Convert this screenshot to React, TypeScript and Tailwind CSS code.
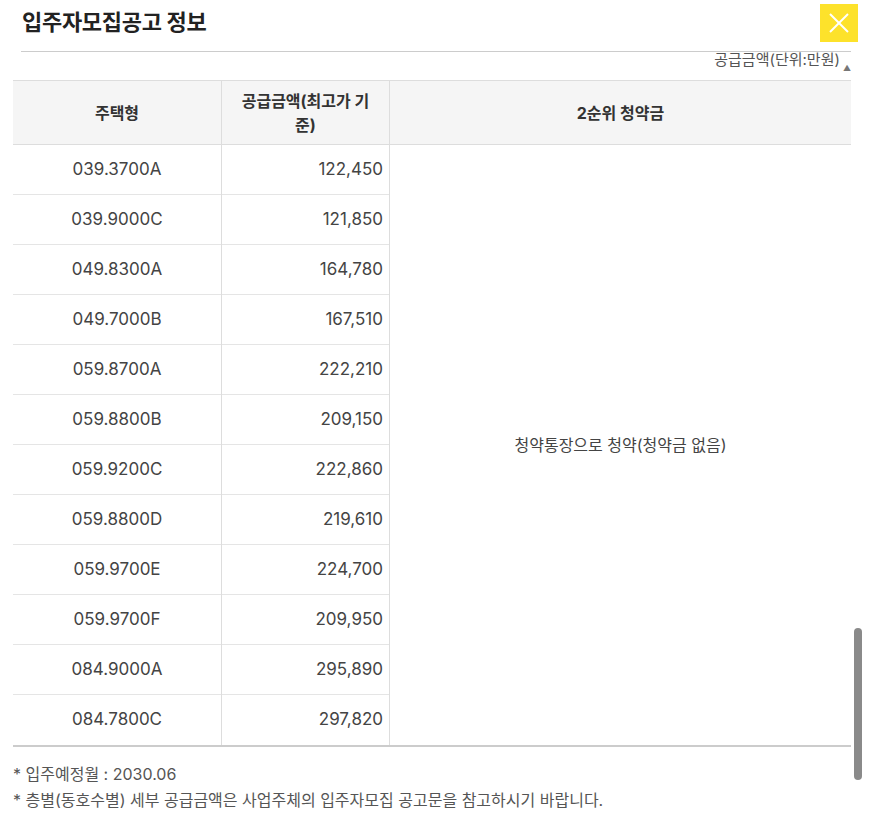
import React from "react";

const rows: [string, string][] = [
  ["039.3700A", "122,450"],
  ["039.9000C", "121,850"],
  ["049.8300A", "164,780"],
  ["049.7000B", "167,510"],
  ["059.8700A", "222,210"],
  ["059.8800B", "209,150"],
  ["059.9200C", "222,860"],
  ["059.8800D", "219,610"],
  ["059.9700E", "224,700"],
  ["059.9700F", "209,950"],
  ["084.9000A", "295,890"],
  ["084.7800C", "297,820"],
];

export default function App() {
  return (
    <div
      className="relative w-[883px] h-[818px] bg-white overflow-hidden text-[#333]"
      style={{ fontFamily: 'Inter, "Noto Sans CJK KR", "Noto Sans", sans-serif' }}
    >
      <div className="flex items-start justify-between pl-[22px] pr-[25px] pt-[4px]">
        <h1 className="text-[22px] font-bold text-[#222] mt-[2px] tracking-[-0.3px]">입주자모집공고 정보</h1>
        <button className="w-[38px] h-[38px] bg-[#fde22b] flex items-center justify-center">
          <svg width="22" height="22" viewBox="0 0 22 22" stroke="white" strokeWidth="2">
            <line x1="2" y1="2" x2="20" y2="20" />
            <line x1="20" y1="2" x2="2" y2="20" />
          </svg>
        </button>
      </div>
      <div className="mx-[21px] w-[830px] border-t border-[#ccc] mt-[9px]" />
      <div className="ml-[13px] w-[838px]">
        <div className="h-[22px] overflow-hidden flex justify-end items-start">
          <span className="text-[15px] text-[#555] mt-[-2px] leading-[20px]">공급금액(단위:만원)</span>
          <span className="text-[8px] text-[#777] ml-[3px] mt-[10px]">▲</span>
        </div>
        <div className="mt-[6px] border-t border-[#ddd]">
          <div className="grid grid-cols-[209px_168px_461px]">
            <div className="h-[64px] bg-[#f5f5f5] flex items-center justify-center font-bold text-[16px] border-b border-[#ddd] border-r">주택형</div>
            <div className="h-[64px] bg-[#f5f5f5] flex items-center justify-center font-bold text-[16px] text-center leading-[24px] px-[14px] border-b border-[#ddd] border-r">공급금액(최고가 기준)</div>
            <div className="h-[64px] bg-[#f5f5f5] flex items-center justify-center font-bold text-[16px] border-b border-[#ddd]">2순위 청약금</div>
          </div>
          <div className="grid grid-cols-[209px_168px_461px] border-b-2 border-[#ccc]">
            <div className="flex flex-col border-r border-[#ddd]">
              {rows.map(([t], i) => (
                <div key={t} className={`h-[50px] flex items-center justify-center text-[17px] text-[#444] ${i < rows.length - 1 ? "border-b border-[#e5e5e5]" : ""}`}>{t}</div>
              ))}
            </div>
            <div className="flex flex-col border-r border-[#ddd]">
              {rows.map(([t, p], i) => (
                <div key={t} className={`h-[50px] flex items-center justify-end pr-[6px] text-[17px] text-[#444] ${i < rows.length - 1 ? "border-b border-[#e5e5e5]" : ""}`}>{p}</div>
              ))}
            </div>
            <div className="flex items-center justify-center text-[16px] text-[#444]">청약통장으로 청약(청약금 없음)</div>
          </div>
        </div>
        <div className="mt-[14px] text-[16px] text-[#555] leading-[26px]">
          <p>* 입주예정월 : 2030.06</p>
          <p>* 층별(동호수별) 세부 공급금액은 사업주체의 입주자모집 공고문을 참고하시기 바랍니다.</p>
        </div>
      </div>
      <div className="absolute left-[854px] top-[628px] w-[8px] h-[152px] rounded-full bg-[#8a8a8a]" />
    </div>
  );
}
